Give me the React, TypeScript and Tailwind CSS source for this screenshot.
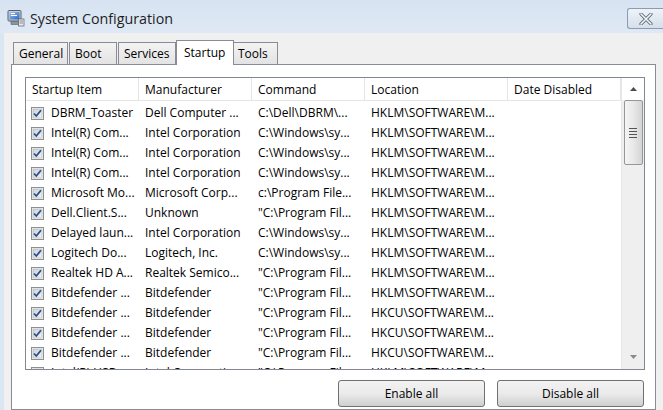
import React from "react";

const rows: string[][] = [
  ["DBRM_Toaster", "Dell Computer ...", "C:\\Dell\\DBRM\\...", "HKLM\\SOFTWARE\\M..."],
  ["Intel(R) Com...", "Intel Corporation", "C:\\Windows\\sy...", "HKLM\\SOFTWARE\\M..."],
  ["Intel(R) Com...", "Intel Corporation", "C:\\Windows\\sy...", "HKLM\\SOFTWARE\\M..."],
  ["Intel(R) Com...", "Intel Corporation", "C:\\Windows\\sy...", "HKLM\\SOFTWARE\\M..."],
  ["Microsoft Mo...", "Microsoft Corp...", "c:\\Program File...", "HKLM\\SOFTWARE\\M..."],
  ["Dell.Client.S...", "Unknown", "\"C:\\Program Fil...", "HKLM\\SOFTWARE\\M..."],
  ["Delayed laun...", "Intel Corporation", "C:\\Windows\\sy...", "HKLM\\SOFTWARE\\M..."],
  ["Logitech Do...", "Logitech, Inc.", "C:\\Windows\\sy...", "HKLM\\SOFTWARE\\M..."],
  ["Realtek HD A...", "Realtek Semico...", "\"C:\\Program Fil...", "HKLM\\SOFTWARE\\M..."],
  ["Bitdefender ...", "Bitdefender", "\"C:\\Program Fil...", "HKLM\\SOFTWARE\\M..."],
  ["Bitdefender ...", "Bitdefender", "\"C:\\Program Fil...", "HKCU\\SOFTWARE\\M..."],
  ["Bitdefender ...", "Bitdefender", "\"C:\\Program Fil...", "HKCU\\SOFTWARE\\M..."],
  ["Bitdefender ...", "Bitdefender", "\"C:\\Program Fil...", "HKCU\\SOFTWARE\\M..."],
  ["Intel(R) USB ...", "Intel Corporation", "\"C:\\Program Fil...", "HKLM\\SOFTWARE\\M..."],
];

function Check() {
  return (
    <svg width="13" height="13" viewBox="0 0 13 13" className="shrink-0">
      <defs>
        <linearGradient id="cbg" x1="0" y1="0" x2="1" y2="1">
          <stop offset="0" stopColor="#cbcfd5" />
          <stop offset="1" stopColor="#f4f4f4" />
        </linearGradient>
      </defs>
      <rect x="0.5" y="0.5" width="12" height="12" fill="#f4f4f4" stroke="#8e8f8f" />
      <rect x="2" y="2" width="9" height="9" fill="url(#cbg)" stroke="#b0b4ba" strokeWidth="0.6" />
      <path d="M3 6.5 L5.3 9 L10 3.3" fill="none" stroke="#2b4f8e" strokeWidth="1.8" />
    </svg>
  );
}

function AppIcon() {
  return (
    <svg width="18" height="18" viewBox="0 0 18 18">
      <defs>
        <linearGradient id="scr" x1="0" y1="0" x2="1" y2="1">
          <stop offset="0" stopColor="#9cc4f0" />
          <stop offset="1" stopColor="#2a66bb" />
        </linearGradient>
      </defs>
      <rect x="1" y="1.5" width="13" height="10.5" rx="1" fill="#c9ced6" stroke="#59606b" />
      <rect x="2.5" y="3" width="10" height="7.5" fill="url(#scr)" />
      <path d="M4 4.5 L8 4.5 M4 6.5 L10 6.5" stroke="#ffffff" strokeWidth="1" />
      <rect x="4" y="12.5" width="8" height="3" fill="#8d939c" stroke="#59606b" strokeWidth="0.6" />
      <rect x="11.5" y="10" width="5.5" height="7" fill="#e9ebee" stroke="#59606b" strokeWidth="0.7" />
      <path d="M12.5 12 L16 12 M12.5 14 L16 14" stroke="#59606b" strokeWidth="0.7" />
    </svg>
  );
}

const colW = ["w-[113px]", "w-[113px]", "w-[113px]", "w-[143px]", "w-[113px]"];
const headers = ["Startup Item", "Manufacturer", "Command", "Location", "Date Disabled"];

export default function App() {
  return (
    <div
      className="w-[663px] h-[410px] overflow-hidden bg-[#dbe6f4] flex flex-col text-black"
      style={{ fontFamily: '"Open Sans", "Noto Sans", sans-serif' }}
    >
      {/* Title bar */}
      <div className="h-[33px] flex items-start shrink-0 bg-gradient-to-b from-[#d7e3f2] to-[#dfe9f5]">
        <div className="ml-[7px] mt-[9px]">
          <AppIcon />
        </div>
        <div className="ml-[5px] mt-[9px] text-[14.3px] leading-[20px] text-[#1e1e1e]">System Configuration</div>
        <div className="ml-auto mt-[8px] w-[36px] h-[21px] rounded-l-[3px] border border-r-0 border-[#8c9bb0] bg-gradient-to-b from-[#eef3f9] to-[#d5dfeb] flex items-center justify-center">
          <svg width="14" height="12" viewBox="0 0 14 12">
            <path d="M2 1 L12 11 M12 1 L2 11" stroke="#5c6878" strokeWidth="3.2" strokeLinecap="round" />
            <path d="M2 1 L12 11 M12 1 L2 11" stroke="#f4f6f9" strokeWidth="1.6" strokeLinecap="round" />
          </svg>
        </div>
      </div>

      {/* Client area */}
      <div className="flex-1 ml-[4px] bg-[#f0f0f0] flex flex-col">
        {/* Tabs */}
        <div className="mt-[7px] ml-[9px] h-[24px] flex items-end text-[12px] relative z-10">
          <div className="w-[55px] h-[22px] border border-b-0 border-[#898c95] bg-gradient-to-b from-[#f3f3f3] to-[#e3e3e3] pl-[5px] leading-[22px]">General</div>
          <div className="w-[48px] h-[22px] ml-[1px] border border-b-0 border-[#898c95] bg-gradient-to-b from-[#f3f3f3] to-[#e3e3e3] pl-[5px] leading-[22px]">Boot</div>
          <div className="w-[58px] h-[22px] ml-[1px] border border-b-0 border-[#898c95] bg-gradient-to-b from-[#f3f3f3] to-[#e3e3e3] pl-[5px] leading-[22px]">Services</div>
          <div className="w-[58px] h-[25px] -mb-px border border-b-0 border-[#898c95] bg-white pl-[7px] leading-[24px]">Startup</div>
          <div className="w-[44px] h-[22px] border border-b-0 border-l-0 border-[#898c95] bg-gradient-to-b from-[#f3f3f3] to-[#e3e3e3] pl-[4px] leading-[22px]">Tools</div>
        </div>

        {/* Tab panel */}
        <div className="ml-[7px] w-[645px] flex-1 border border-[#898c95] bg-white pl-[13px] pt-[12px]">
          {/* List view */}
          <div className="w-[620px] h-[293px] border border-[#828790] flex text-[12px] overflow-hidden">
            <div className="flex flex-col w-[595px]">
              <div className="h-[23px] flex border-b border-[#e5e5e5] shrink-0">
                {headers.map((h, i) => (
                  <div key={h} className={`${colW[i]} border-r border-[#e5e5e5] pl-[6px] pt-[1px] leading-[22px] shrink-0`}>
                    {h}
                  </div>
                ))}
              </div>
              <div className="flex flex-col pt-[2px]">
                {rows.map((r, idx) => (
                  <div key={idx} className="h-[20px] flex items-center shrink-0">
                    <div className="w-[113px] flex items-center pl-[5px] gap-[7px] shrink-0 whitespace-nowrap">
                      <Check />
                      <span className="leading-[20px]">{r[0]}</span>
                    </div>
                    <div className="w-[113px] pl-[6px] whitespace-nowrap shrink-0 leading-[20px]">{r[1]}</div>
                    <div className="w-[113px] pl-[6px] whitespace-nowrap shrink-0 leading-[20px]">{r[2]}</div>
                    <div className="w-[143px] pl-[6px] whitespace-nowrap shrink-0 leading-[20px]">{r[3]}</div>
                    <div className="w-[113px] shrink-0" />
                  </div>
                ))}
              </div>
            </div>
            {/* Scrollbar */}
            <div className="w-[23px] bg-[#efefef] border-l border-[#e8e8e8] flex flex-col items-center">
              <div className="h-[22px] w-full flex items-center justify-center bg-white">
                <svg width="7" height="4" viewBox="0 0 7 4"><path d="M0 4 L3.5 0 L7 4 Z" fill="#4d4d4d" /></svg>
              </div>
              <div className="w-[19px] h-[65px] rounded-[2px] border border-[#979797] bg-gradient-to-r from-[#f4f4f4] via-[#e8e8e8] to-[#d4d4d4] flex flex-col items-center justify-center gap-[2px]">
                <div className="w-[8px] h-px bg-[#555]" />
                <div className="w-[8px] h-px bg-[#555]" />
                <div className="w-[8px] h-px bg-[#555]" />
                <div className="w-[8px] h-px bg-[#555]" />
              </div>
              <div className="flex-1" />
              <div className="h-[24px] w-full flex items-center justify-center">
                <svg width="7" height="4" viewBox="0 0 7 4"><path d="M0 0 L7 0 L3.5 4 Z" fill="#8a8a8a" /></svg>
              </div>
            </div>
          </div>

          {/* Buttons */}
          <div className="mt-[10px] w-[620px] flex justify-end gap-[12px] pr-[1px] text-[12px]">
            <button className="w-[147px] h-[27px] pt-[1px] rounded-[3px] border border-[#707070] bg-gradient-to-b from-[#f2f2f2] via-[#ebebeb] to-[#cfcfcf]">Enable all</button>
            <button className="w-[147px] h-[27px] pt-[1px] rounded-[3px] border border-[#707070] bg-gradient-to-b from-[#f2f2f2] via-[#ebebeb] to-[#cfcfcf]">Disable all</button>
          </div>
        </div>
      </div>
    </div>
  );
}
